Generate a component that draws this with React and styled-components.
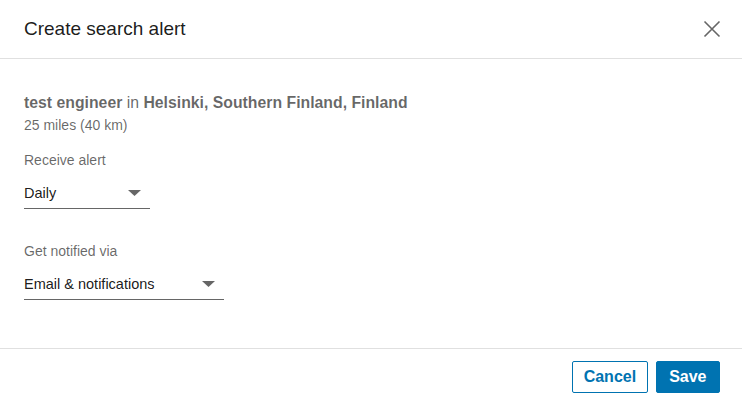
import React from "react";
import styled, { createGlobalStyle } from "styled-components";

const Global = createGlobalStyle`
  html, body { margin: 0; padding: 0; background: #fff; }
  body { font-family: "Liberation Sans", Arial, sans-serif; -webkit-font-smoothing: antialiased; }
  * { box-sizing: border-box; }
`;

const Modal = styled.div`
  width: 742px;
  height: 401px;
  display: flex;
  flex-direction: column;
  background: #fff;
`;

const Header = styled.header`
  height: 59px;
  flex: none;
  display: flex;
  align-items: center;
  justify-content: space-between;
  padding: 0 18px 0 24px;
  border-bottom: 1px solid #e0e0e0;
`;

const Title = styled.h2`
  margin: 0;
  font-size: 19px;
  font-weight: 400;
  color: rgba(0, 0, 0, 0.9);
`;

const CloseButton = styled.button`
  border: 0;
  background: none;
  padding: 0;
  width: 24px;
  height: 24px;
  display: flex;
  align-items: center;
  justify-content: center;
  cursor: pointer;
`;

const Body = styled.main`
  flex: 1;
  display: flex;
  flex-direction: column;
  align-items: flex-start;
  padding: 34px 24px 0;
`;

const Headline = styled.div`
  font-size: 15.8px;
  line-height: 20px;
  color: rgba(0, 0, 0, 0.6);
  b { font-weight: 700; color: rgba(0, 0, 0, 0.6); }
`;

const Sub = styled.div`
  font-size: 14px;
  line-height: 18px;
  margin-top: 3px;
  color: rgba(0, 0, 0, 0.6);
`;

const Label = styled.div`
  font-size: 14px;
  line-height: 18px;
  color: rgba(0, 0, 0, 0.6);
  margin-top: ${(p) => p.$top}px;
`;

const Select = styled.div`
  width: ${(p) => p.$w}px;
  height: 31px;
  margin-top: 9px;
  display: flex;
  align-items: center;
  justify-content: space-between;
  padding: 0 9px 0 0;
  border-bottom: 1px solid rgba(0, 0, 0, 0.6);
  font-size: 14.5px;
  color: rgba(0, 0, 0, 0.9);
`;

const Footer = styled.footer`
  height: 53px;
  flex: none;
  display: flex;
  justify-content: flex-end;
  align-items: flex-start;
  gap: 8px;
  padding: 12px 22px 0;
  border-top: 1px solid #e0e0e0;
`;

const Button = styled.button`
  height: 32px;
  padding: 0 ${(p) => (p.$primary ? 12.5 : 10.5)}px;
  border-radius: 2px;
  font-family: "Liberation Sans", Arial, sans-serif;
  font-size: 16px;
  font-weight: 700;
  cursor: pointer;
  border: 1px solid #0073b1;
  background: ${(p) => (p.$primary ? "#0073b1" : "#fff")};
  color: ${(p) => (p.$primary ? "#fff" : "#0073b1")};
`;

const Caret = () => (
  <svg width="13" height="6" viewBox="0 0 13 6">
    <path d="M0 0 L13 0 L6.5 6 Z" fill="#666" />
  </svg>
);

export default function App() {
  return (
    <>
      <Global />
      <Modal>
        <Header>
          <Title>Create search alert</Title>
          <CloseButton aria-label="Dismiss">
            <svg width="18" height="18" viewBox="0 0 18 18">
              <path d="M1.5 1.5 L16.5 16.5 M16.5 1.5 L1.5 16.5" stroke="#666" strokeWidth="1.6" fill="none" />
            </svg>
          </CloseButton>
        </Header>
        <Body>
          <Headline>
            <b>test engineer</b> in <b>Helsinki, Southern Finland, Finland</b>
          </Headline>
          <Sub>25 miles (40 km)</Sub>
          <Label $top={17}>Receive alert</Label>
          <Select $w={126}>
            <span>Daily</span>
            <Caret />
          </Select>
          <Label $top={33}>Get notified via</Label>
          <Select $w={200}>
            <span>Email &amp; notifications</span>
            <Caret />
          </Select>
        </Body>
        <Footer>
          <Button>Cancel</Button>
          <Button $primary>Save</Button>
        </Footer>
      </Modal>
    </>
  );
}
